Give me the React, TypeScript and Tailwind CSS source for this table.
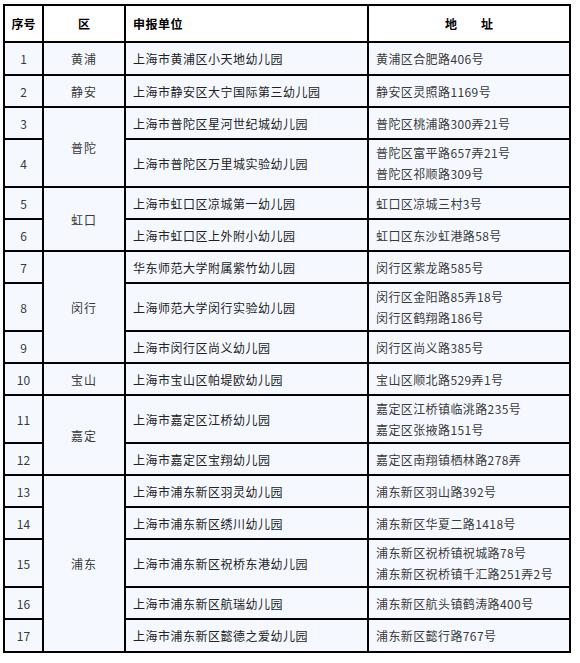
const rows: { no: number; unit: string; addr: string[]; h: number }[] = [
  { no: 1, unit: "上海市黄浦区小天地幼儿园", addr: ["黄浦区合肥路406号"], h: 33 },
  { no: 2, unit: "上海市静安区大宁国际第三幼儿园", addr: ["静安区灵照路1169号"], h: 32 },
  { no: 3, unit: "上海市普陀区星河世纪城幼儿园", addr: ["普陀区桃浦路300弄21号"], h: 32 },
  { no: 4, unit: "上海市普陀区万里城实验幼儿园", addr: ["普陀区富平路657弄21号", "普陀区祁顺路309号"], h: 48 },
  { no: 5, unit: "上海市虹口区凉城第一幼儿园", addr: ["虹口区凉城三村3号"], h: 32 },
  { no: 6, unit: "上海市虹口区上外附小幼儿园", addr: ["虹口区东沙虹港路58号"], h: 32 },
  { no: 7, unit: "华东师范大学附属紫竹幼儿园", addr: ["闵行区紫龙路585号"], h: 32 },
  { no: 8, unit: "上海师范大学闵行实验幼儿园", addr: ["闵行区金阳路85弄18号", "闵行区鹤翔路186号"], h: 48 },
  { no: 9, unit: "上海市闵行区尚义幼儿园", addr: ["闵行区尚义路385号"], h: 32 },
  { no: 10, unit: "上海市宝山区帕堤欧幼儿园", addr: ["宝山区顺北路529弄1号"], h: 32 },
  { no: 11, unit: "上海市嘉定区江桥幼儿园", addr: ["嘉定区江桥镇临洮路235号", "嘉定区张掖路151号"], h: 48 },
  { no: 12, unit: "上海市嘉定区宝翔幼儿园", addr: ["嘉定区南翔镇栖林路278弄"], h: 32 },
  { no: 13, unit: "上海市浦东新区羽灵幼儿园", addr: ["浦东新区羽山路392号"], h: 32 },
  { no: 14, unit: "上海市浦东新区绣川幼儿园", addr: ["浦东新区华夏二路1418号"], h: 32 },
  { no: 15, unit: "上海市浦东新区祝桥东港幼儿园", addr: ["浦东新区祝桥镇祝城路78号", "浦东新区祝桥镇千汇路251弄2号"], h: 48 },
  { no: 16, unit: "上海市浦东新区航瑞幼儿园", addr: ["浦东新区航头镇鹤涛路400号"], h: 32 },
  { no: 17, unit: "上海市浦东新区懿德之爱幼儿园", addr: ["浦东新区懿行路767号"], h: 33 },
];

// district cell: first row number -> [name, rowspan]
const districts: Record<number, [string, number]> = {
  1: ["黄浦", 1],
  2: ["静安", 1],
  3: ["普陀", 2],
  5: ["虹口", 2],
  7: ["闵行", 3],
  10: ["宝山", 1],
  11: ["嘉定", 2],
  13: ["浦东", 5],
};

const rowH: Record<number, string> = {
  32: "h-[32px]",
  33: "h-[33px]",
  48: "h-[48px]",
};

export default function App() {
  return (
    <div
      className="w-[580px] h-[663px] bg-white pt-[4px] pl-[3px]"
      style={{ fontFamily: '"Noto Sans CJK SC", "Noto Sans", sans-serif' }}
    >
      <table className="border-collapse w-[568px] table-fixed text-[12px] leading-[21px]">
        <colgroup>
          <col className="w-[39px]" />
          <col className="w-[82px]" />
          <col className="w-[243px]" />
          <col className="w-[202px]" />
        </colgroup>
        <thead>
          <tr className="h-[37px] bg-white text-black font-bold">
            <th className="border-2 border-black text-center p-0">序号</th>
            <th className="border-2 border-black text-center p-0">区</th>
            <th className="border-2 border-black text-left pl-[7px] tracking-[0.5px]">申报单位</th>
            <th className="border-2 border-black text-center p-0">地{"\u3000\u3000"}址</th>
          </tr>
        </thead>
        <tbody className="bg-[#f5f9ff]">
          {rows.map((r) => {
            const d = districts[r.no];
            return (
              <tr key={r.no} className={rowH[r.h]}>
                <td className="border-2 border-black text-center text-[#3a3a3a] p-0">{r.no}</td>
                {d && (
                  <td
                    rowSpan={d[1]}
                    className="border-2 border-black text-center text-[#3a3a3a] p-0 tracking-[1px]"
                  >
                    {d[0]}
                  </td>
                )}
                <td className="border-2 border-black text-[#222] pl-[7px] py-0 whitespace-nowrap tracking-[0.5px]">
                  {r.unit}
                </td>
                <td className="border-2 border-black text-[#3a3a3a] pl-[7px] py-0 whitespace-nowrap tracking-[0.4px]">
                  {r.addr.map((a) => (
                    <div key={a}>{a}</div>
                  ))}
                </td>
              </tr>
            );
          })}
        </tbody>
      </table>
    </div>
  );
}
